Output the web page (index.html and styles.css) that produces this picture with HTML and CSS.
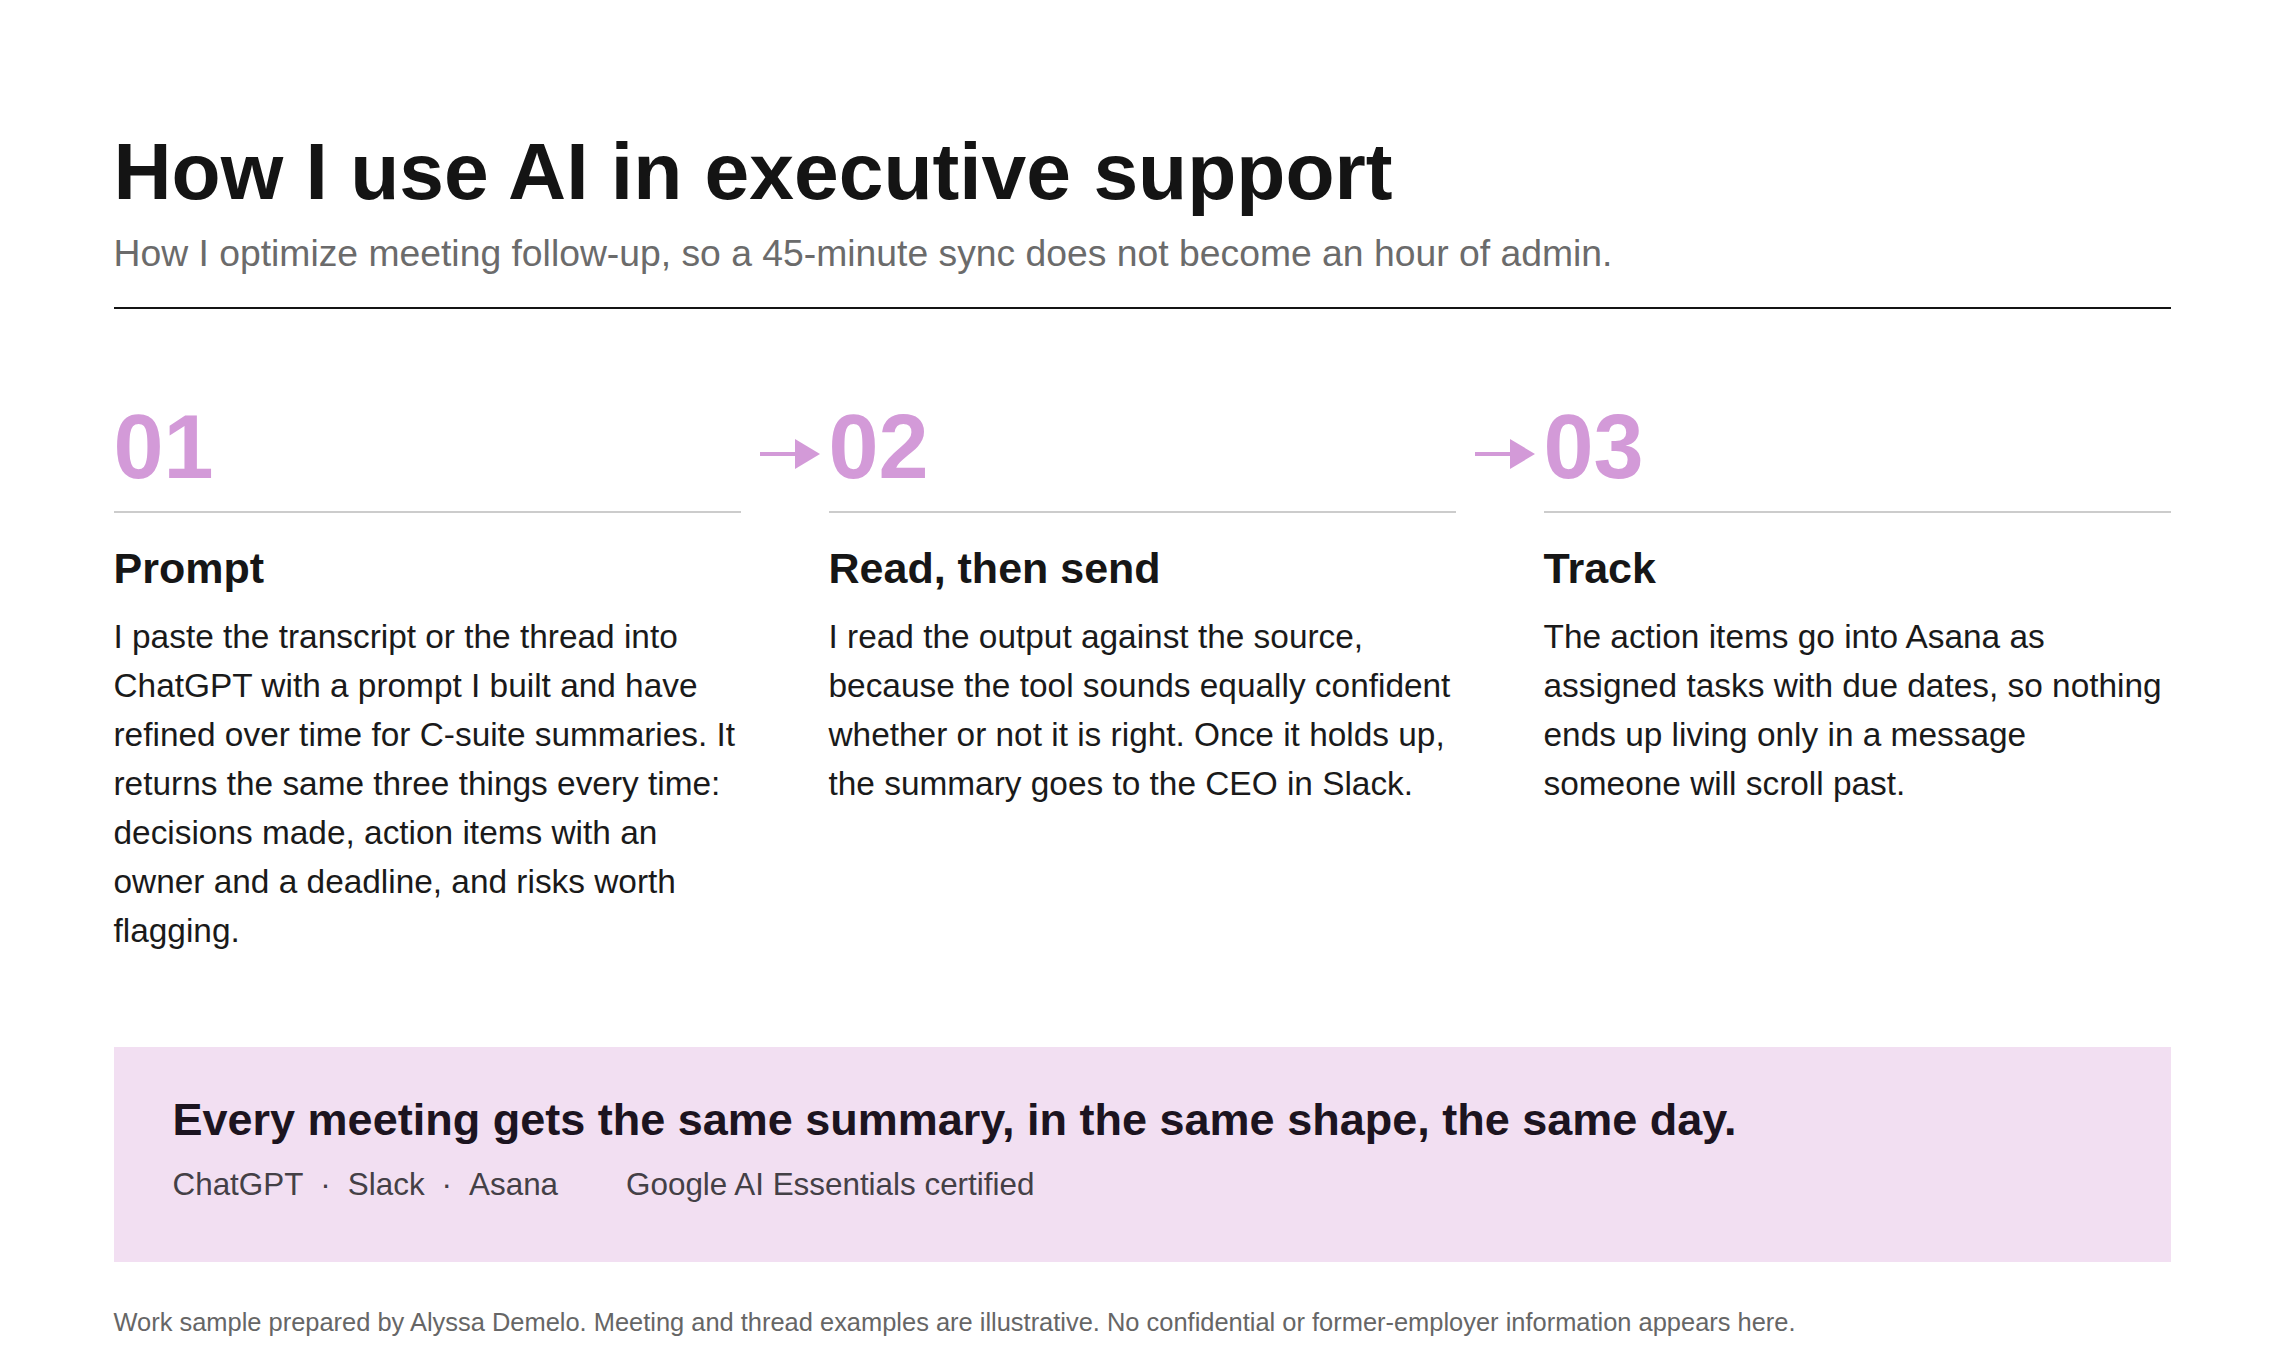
FILE: index.html
```html
<!DOCTYPE html>
<html lang="en">
<head>
<meta charset="utf-8">
<title>How I use AI in executive support</title>
<link rel="stylesheet" href="styles.css">
</head>
<body>
<main class="page">
  <header class="intro">
    <h1 class="title">How I use AI in executive support</h1>
    <p class="subtitle">How I optimize meeting follow-up, so a 45-minute sync does not become an hour of admin.</p>
  </header>

  <section class="steps">
    <article class="step">
      <div class="step-num">01</div>
      <h2 class="step-title">Prompt</h2>
      <p class="step-text">I paste the transcript or the thread into ChatGPT with a prompt I built and have refined over time for C-suite summaries. It returns the same three things every time: decisions made, action items with an owner and a deadline, and risks worth flagging.</p>
    </article>
    <article class="step">
      <svg class="arrow" width="60" height="30" viewBox="0 0 60 30" aria-hidden="true"><rect x="0" y="13" width="38" height="4"/><polygon points="35,0 60,15 35,30"/></svg>
      <div class="step-num">02</div>
      <h2 class="step-title">Read, then send</h2>
      <p class="step-text">I read the output against the source, because the tool sounds equally confident whether or not it is right. Once it holds up, the summary goes to the CEO in Slack.</p>
    </article>
    <article class="step">
      <svg class="arrow" width="60" height="30" viewBox="0 0 60 30" aria-hidden="true"><rect x="0" y="13" width="38" height="4"/><polygon points="35,0 60,15 35,30"/></svg>
      <div class="step-num">03</div>
      <h2 class="step-title">Track</h2>
      <p class="step-text">The action items go into Asana as assigned tasks with due dates, so nothing ends up living only in a message someone will scroll past.</p>
    </article>
  </section>

  <section class="callout">
    <p class="callout-title">Every meeting gets the same summary, in the same shape, the same day.</p>
    <p class="callout-meta"><span>ChatGPT</span><span class="sep">·</span><span>Slack</span><span class="sep">·</span><span>Asana</span><span class="cert">Google AI Essentials certified</span></p>
  </section>

  <footer class="note">Work sample prepared by Alyssa Demelo. Meeting and thread examples are illustrative. No confidential or former-employer information appears here.</footer>
</main>
</body>
</html>
```
FILE: styles.css
```css
html, body {
  margin: 0;
  padding: 0;
  background: #ffffff;
}

body {
  font-family: "Liberation Sans", Arial, sans-serif;
  color: #161616;
}

.page {
  max-width: 2057px;
  margin: 0 auto;
  padding-top: 127px;
}

.intro {
  border-bottom: 2px solid #141414;
  padding-bottom: 30px;
}

.title {
  margin: 0;
  font-size: 80.4px;
  line-height: 88px;
  font-weight: 700;
  color: #141414;
}

.subtitle {
  margin: 14px 0 0;
  font-size: 37.3px;
  line-height: 48px;
  color: #6b6b6b;
}

.steps {
  display: grid;
  grid-template-columns: repeat(3, 1fr);
  column-gap: 88px;
  margin-top: 94px;
}

.step {
  position: relative;
}

.step-num {
  font-size: 90px;
  line-height: 88px;
  font-weight: 700;
  color: #d39ad8;
  padding-bottom: 20px;
  border-bottom: 2px solid #cccccc;
}

.arrow {
  position: absolute;
  left: -69px;
  top: 36px;
  fill: #d39ad8;
}

.step-title {
  margin: 29px 0 0;
  font-size: 43px;
  line-height: 52px;
  font-weight: 700;
  color: #161616;
}

.step-text {
  margin: 18px 0 0;
  font-size: 33.4px;
  line-height: 49px;
  color: #1a1a1a;
}

.callout {
  margin-top: 92px;
  background: #f2dff2;
  padding: 46px 59px 56px;
}

.callout-title {
  margin: 0;
  font-size: 45px;
  line-height: 54px;
  font-weight: 700;
  color: #1c1420;
}

.callout-meta {
  margin: 16px 0 0;
  font-size: 31.4px;
  line-height: 43px;
  color: #444046;
}

.sep {
  margin: 0 17px;
}

.cert {
  margin-left: 68px;
}

.note {
  margin-top: 42px;
  font-size: 25.45px;
  line-height: 36px;
  color: #666666;
}
```
